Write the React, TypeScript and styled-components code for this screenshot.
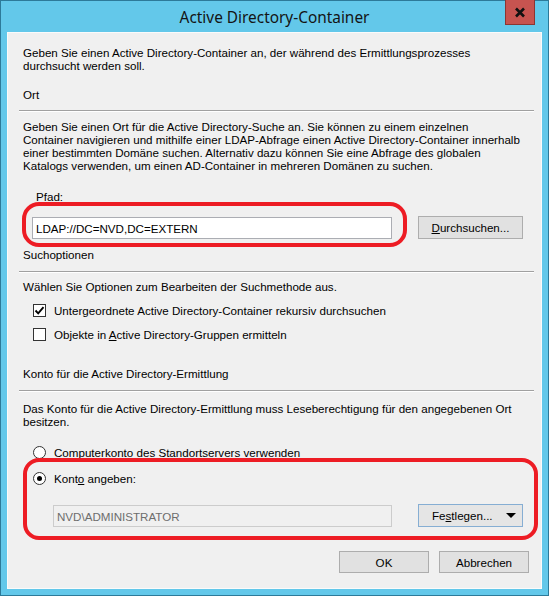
import React from "react";
import styled, { createGlobalStyle } from "styled-components";

const GlobalStyle = createGlobalStyle`
  html, body {
    margin: 0;
    padding: 0;
    background: #ffffff;
  }
  * {
    box-sizing: border-box;
  }
`;

function App() {
  return (
    <>
      <GlobalStyle />
      <Window>
        <TitleBar>
          <Title>Active Directory-Container</Title>
          <CloseButton>
            <svg width="12" height="11" viewBox="0 0 12 11">
              <path d="M2 1.5 L10 9.5 M10 1.5 L2 9.5" stroke="#111" strokeWidth="2.6" />
            </svg>
          </CloseButton>
        </TitleBar>
        <Client>
          <Text>
            Geben Sie einen Active Directory-Container an, der während des Ermittlungsprozesses
            <br />
            durchsucht werden soll.
          </Text>
          <Text $top={16}>Ort</Text>
          <Separator $top={9} />
          <Text $top={8}>
            Geben Sie einen Ort für die Active Directory-Suche an. Sie können zu einem einzelnen
            <br />
            Container navigieren und mithilfe einer LDAP-Abfrage einen Active Directory-Container innerhalb
            <br />
            einer bestimmten Domäne suchen. Alternativ dazu können Sie eine Abfrage des globalen
            <br />
            Katalogs verwenden, um einen AD-Container in mehreren Domänen zu suchen.
          </Text>
          <Text $top={18} $indent={13}>
            Pfad:
          </Text>
          <FieldRow $top={13}>
            <TextBox $indent={9}>LDAP://DC=NVD,DC=EXTERN</TextBox>
            <Button $width={105}>
              <span>
                <u>D</u>urchsuchen...
              </span>
            </Button>
          </FieldRow>
          <Text $top={9}>Suchoptionen</Text>
          <Separator $top={10} />
          <Text $top={7}>Wählen Sie Optionen zum Bearbeiten der Suchmethode aus.</Text>
          <OptionRow $top={11}>
            <CheckBox>
              <svg width="11" height="11" viewBox="0 0 11 11">
                <path d="M1.5 5.5 L4.2 8.3 L9.5 2.2" stroke="#000" strokeWidth="1.9" fill="none" />
              </svg>
            </CheckBox>
            <Label>Untergeordnete Active Directory-Container rekursiv durchsuchen</Label>
          </OptionRow>
          <OptionRow $top={11}>
            <CheckBox />
            <Label>
              Objekte in <u>A</u>ctive Directory-Gruppen ermitteln
            </Label>
          </OptionRow>
          <Text $top={26}>Konto für die Active Directory-Ermittlung</Text>
          <Separator $top={10} />
          <Text $top={10}>
            Das Konto für die Active Directory-Ermittlung muss Leseberechtigung für den angegebenen Ort
            <br />
            besitzen.
          </Text>
          <OptionRow $top={18}>
            <Radio />
            <Label>Computerkonto des Standortservers verwenden</Label>
          </OptionRow>
          <OptionRow $top={13}>
            <Radio $checked />
            <Label>
              Kont<u>o</u> angeben:
            </Label>
          </OptionRow>
          <FieldRow $top={19}>
            <TextBox $indent={30} $disabled>
              NVD\ADMINISTRATOR
            </TextBox>
            <SplitButton>
              <span>
                Fe<u>s</u>tlegen...
              </span>
              <Arrow />
            </SplitButton>
          </FieldRow>
          <ButtonBar>
            <Button $width={90} $height={22}>
              OK
            </Button>
            <Button $width={90} $height={22}>
              Abbrechen
            </Button>
          </ButtonBar>
        </Client>
        <Annotation $x={22} $y={202} $w={385} $h={45} $r={17} />
        <Annotation $x={23} $y={458} $w={515} $h={82} $r={16} />
      </Window>
    </>
  );
}

const Window = styled.div`
  position: relative;
  display: flex;
  flex-direction: column;
  width: 549px;
  height: 596px;
  background: #63c8ea;
  border: 1px solid #2d7a99;
  padding: 0 6px 6px 6px;
  font-family: "Liberation Sans", Arial, sans-serif;
  font-size: 11.6px;
  color: #000;
`;

const TitleBar = styled.div`
  position: relative;
  height: 31px;
  flex: none;
  display: flex;
  align-items: center;
  justify-content: center;
`;

const Title = styled.div`
  font-family: "Noto Sans", "Open Sans", sans-serif;
  font-size: 15.4px;
  color: #141414;
  margin-top: 2px;
`;

const CloseButton = styled.div`
  position: absolute;
  top: -1px;
  right: 7px;
  width: 30px;
  height: 25px;
  background: #c75450;
  border: 1px solid #8c3632;
  border-top: none;
  display: flex;
  align-items: center;
  justify-content: center;
`;

const Client = styled.div`
  flex: 1;
  display: flex;
  flex-direction: column;
  background: #f0f0f0;
  border: 1px solid #fbfbfb;
  padding: 13px 7px 0 15px;
`;

const Text = styled.div<{ $top?: number; $indent?: number }>`
  line-height: 13px;
  margin-top: ${(p) => p.$top ?? 0}px;
  margin-left: ${(p) => p.$indent ?? 0}px;
  white-space: nowrap;
`;

const Separator = styled.div<{ $top: number }>`
  height: 2px;
  margin: ${(p) => p.$top}px 0 0 -4px;
  border-top: 1px solid #a0a0a0;
  border-bottom: 1px solid #ffffff;
`;

const FieldRow = styled.div<{ $top: number }>`
  display: flex;
  align-items: center;
  height: 23px;
  margin-top: ${(p) => p.$top}px;
`;

const TextBox = styled.div<{ $indent: number; $disabled?: boolean }>`
  width: ${(p) => 369 - p.$indent}px;
  height: 22px;
  margin-left: ${(p) => p.$indent}px;
  margin-top: 1px;
  padding: 0 3px;
  display: flex;
  align-items: center;
  background: ${(p) => (p.$disabled ? "#f0f0f0" : "#ffffff")};
  border: 1px solid ${(p) => (p.$disabled ? "#cccccc" : "#abadb3")};
  color: ${(p) => (p.$disabled ? "#6d6d6d" : "#000")};
`;

const Button = styled.div<{ $width: number; $height?: number }>`
  width: ${(p) => p.$width}px;
  height: ${(p) => p.$height ?? 23}px;
  margin-left: 26px;
  display: flex;
  align-items: center;
  justify-content: center;
  background: #e1e1e1;
  border: 1px solid #adadad;
  flex: none;
`;

const SplitButton = styled.div`
  width: 105px;
  height: 23px;
  margin-left: 26px;
  display: flex;
  align-items: center;
  justify-content: space-between;
  padding: 0 6px 0 13px;
  background: #e5e5e5;
  border: 1px solid #86aed3;
  flex: none;
`;

const Arrow = styled.span`
  width: 0;
  height: 0;
  border-left: 5px solid transparent;
  border-right: 5px solid transparent;
  border-top: 5px solid #000;
`;

const OptionRow = styled.div<{ $top: number }>`
  display: flex;
  align-items: center;
  gap: 8px;
  height: 13px;
  margin-top: ${(p) => p.$top}px;
  margin-left: 10px;
  line-height: 13px;
  white-space: nowrap;
`;

const Label = styled.span`
  white-space: nowrap;
`;

const CheckBox = styled.span`
  width: 13px;
  height: 13px;
  flex: none;
  display: flex;
  align-items: center;
  justify-content: center;
  background: #ffffff;
  border: 1px solid #333333;
`;

const Radio = styled.span<{ $checked?: boolean }>`
  width: 13px;
  height: 13px;
  flex: none;
  border-radius: 50%;
  background: #ffffff;
  border: 1px solid #333333;
  display: flex;
  align-items: center;
  justify-content: center;
  &::after {
    content: "";
    width: 5px;
    height: 5px;
    border-radius: 50%;
    background: ${(p) => (p.$checked ? "#000" : "transparent")};
  }
`;

const ButtonBar = styled.div`
  display: flex;
  justify-content: flex-end;
  gap: 10px;
  margin-top: 24px;
  margin-right: 5px;
  & > div {
    margin-left: 0;
  }
`;

const Annotation = styled.div<{ $x: number; $y: number; $w: number; $h: number; $r: number }>`
  position: absolute;
  left: ${(p) => p.$x - 1}px;
  top: ${(p) => p.$y - 1}px;
  width: ${(p) => p.$w}px;
  height: ${(p) => p.$h}px;
  border: 4px solid #ed1c24;
  border-radius: ${(p) => p.$r}px;
  pointer-events: none;
`;

export default App;
